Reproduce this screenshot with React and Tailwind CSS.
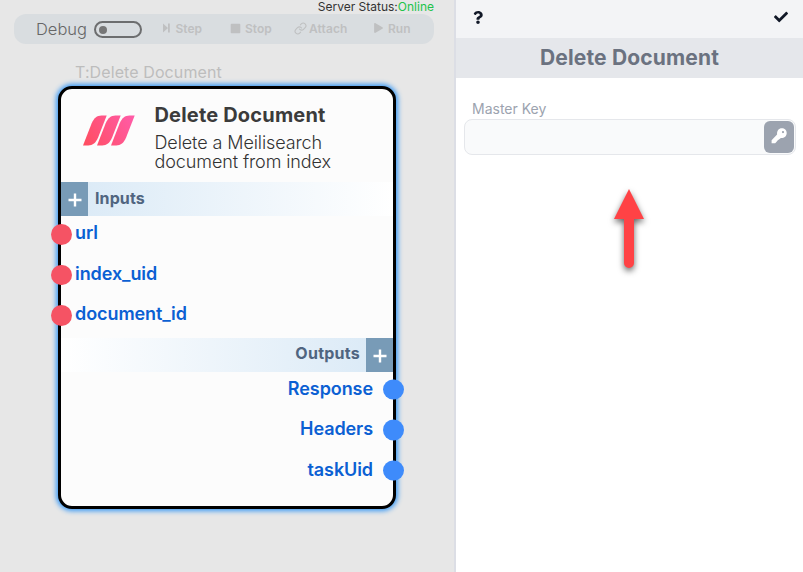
import React from "react";
import { FaCheck, FaQuestion, FaStop, FaPlay } from "react-icons/fa";
import { FiLink } from "react-icons/fi";

const font = "font-['Inter','Liberation_Sans',sans-serif]";

function Tool({ icon, label, className }) {
  return (
    <div className={`flex shrink-0 items-center text-[12px] leading-none font-semibold text-[#bfc0c1] ${className}`}>
      {icon}
      <span className="whitespace-nowrap">{label}</span>
    </div>
  );
}

function StepIcon() {
  return (
    <svg className="mb-[3px] h-[10px] w-[7px]" viewBox="0 0 7 10" fill="currentColor">
      <path d="M0 0.500 5 5 0 9.500ZM5 0.500H6.800V9.500H5Z" />
    </svg>
  );
}

function KeyIcon() {
  return (
    <svg className="mb-[2px] size-[16px]" viewBox="0 0 16 16">
      <path
        fill="white"
        fillRule="evenodd"
        d="M10.800 0.300C13.600 0.300 15.700 2.300 15.700 4.900C15.700 8 13.300 10.200 9.900 10L8.300 11.300L6.800 12.300L5.600 13.700L4.200 15.300H.600V12.200L6.100 6.600C5.700 2.900 7.700.300 10.800.300ZM12 3A1.100 1.100 0 1 0 12 5.200A1.100 1.100 0 1 0 12 3Z"
      />
    </svg>
  );
}

function Toolbar() {
  return (
    <div className="ml-[14px] flex h-[30px] w-[420px] items-center rounded-[12px] bg-[#d9dde0] pl-[22px]">
      <span className="w-[58px] text-[16.5px] leading-none font-light text-[#666]">Debug</span>
      <div className="mt-px flex h-[17px] w-[48px] items-center rounded-full border-2 border-[#6d6e6f] pl-[3px]">
        <div className="size-[8px] rounded-full bg-[#777]" />
      </div>
      <Tool className="ml-[21px] w-[67px] gap-[5.500px]" icon={<StepIcon />} label="Step" />
      <Tool className="w-[64px] gap-[4px]" icon={<FaStop className="mb-[2px] size-[11px]" />} label="Stop" />
      <Tool className="w-[80px] gap-[2px] tracking-[0.1px]" icon={<FiLink className="mb-[2px] size-[13px]" />} label="Attach" />
      <Tool className="gap-[5px]" icon={<FaPlay className="mb-[2px] h-[10px] w-[9px]" />} label="Run" />
    </div>
  );
}

function Logo() {
  return (
    <svg className="h-[31px] w-[52px]" viewBox="0 0 52 31">
      <defs>
        <linearGradient id="brand" gradientUnits="userSpaceOnUse" x1="52" y1="0" x2="4" y2="31">
          <stop offset="0" stopColor="#ff5caa" />
          <stop offset="1" stopColor="#ff4e62" />
        </linearGradient>
      </defs>
      <g fill="url(#brand)">
        <path d="M0 30.5 8.7 8.2C10.800 3.200 14 .5 18.500 .5H23.700L15 22.800C12.900 27.900 9.700 30.500 5.200 30.500Z" />
        <path d="M14 30.5 22.700 8.2C24.800 3.200 28 .5 32.500 .5H37.700L29 22.800C26.900 27.900 23.700 30.500 19.200 30.500Z" />
        <path d="M28 30.5 36.700 8.2C38.800 3.200 42 .5 46.500 .5H51.700L43 22.800C40.900 27.900 37.700 30.500 33.200 30.500Z" />
      </g>
    </svg>
  );
}

function Plus() {
  return (
    <div className="flex h-full w-[27px] shrink-0 items-center justify-center bg-[#789bb7]">
      <svg className="mt-[2px] size-[14px]" viewBox="0 0 14 14" stroke="white" strokeWidth="2.4">
        <path d="M0.500 7H13.500M7 0.500V13.500" />
      </svg>
    </div>
  );
}

function Port({ name, out }) {
  return (
    <div className={`relative flex h-[40.500px] items-center text-[18px] leading-none font-semibold tracking-[-0.08px] text-[#0b60d3] ${out ? "justify-end pr-[20px]" : "pl-[14px]"}`}>
      <span className="mb-[2px]">{name}</span>
      <div className={`absolute top-[10px] size-[20.500px] rounded-full ${out ? "-right-[10.500px] bg-[#3e8bfb]" : "-left-[10px] bg-[#f55364]"}`} />
    </div>
  );
}

function NodeCard() {
  return (
    <div className="mt-[4px] ml-[58px] flex h-[423px] w-[338px] flex-col rounded-[14px] border-3 border-black bg-[#fcfcfc] shadow-[0_0_5px_2px_#3b9af5]">
      <div className="flex h-[93px] shrink-0">
        <div className="w-[93.500px] pt-[26px] pl-[22px]"><Logo /></div>
        <div className="pt-[14px]">
          <h2 className="text-[20px] leading-[24px] font-bold tracking-[0.18px] text-[#3b3b3b]">Delete Document</h2>
          <p className="mt-[6px] text-[18px] leading-[19px] font-light tracking-[-0.1px] text-[#333]">Delete a Meilisearch<br />document from index</p>
        </div>
      </div>
      <div className="flex h-[34px] shrink-0 items-center bg-linear-to-r from-[#d9e9f6] to-white">
        <Plus />
        <span className="mb-[2px] pl-[7px] text-[16px] leading-none font-bold tracking-[0.1px] text-[#506580]">Inputs</span>
      </div>
      <div className="h-[121.500px] shrink-0 -translate-y-[2px]">
        <Port name="url" />
        <Port name="index_uid" />
        <Port name="document_id" />
      </div>
      <div className="flex h-[34px] shrink-0 items-center justify-end bg-linear-to-l from-[#d9e9f6] to-white">
        <span className="mb-[3px] pr-[6px] text-[16px] leading-none font-bold tracking-[0.25px] text-[#506580]">Outputs</span>
        <Plus />
      </div>
      <div className="-translate-y-[2.500px]">
        <Port name="Response" out />
        <Port name="Headers" out />
        <Port name="taskUid" out />
      </div>
    </div>
  );
}

function Arrow() {
  return (
    <svg className="mt-[29px] ml-[148px] h-[100px] w-[50px] overflow-visible drop-shadow-[0_3px_3px_rgba(0,0,0,0.6)]" viewBox="0 0 50 100">
      <path d="M25 5 40 35H30V79A5 5 0 0 1 20 79V35H10Z" fill="#ff4245" />
    </svg>
  );
}

export default function App() {
  return (
    <div className={`flex h-[572px] w-[803px] overflow-hidden ${font}`}>
      <main className="w-[454px] shrink-0 bg-[#e7e7e7]">
        <div className="flex h-[14px] justify-end pr-[20px] text-[12px] leading-[13px] text-[#333]">
          Server Status:<span className="text-[#22c34a]">Online</span>
        </div>
        <Toolbar />
        <div className="mt-[18px] ml-[75px] h-[20px] text-[16px] leading-[20px] tracking-[0.1px] text-[#bdbdbd]">T:Delete Document</div>
        <NodeCard />
      </main>
      <aside className="grow border-l-2 border-[#dcdee5] bg-white">
        <div className="flex h-[38px] items-center justify-between bg-[#f3f4f6] pr-[15px] pl-[15px] text-[#111827]">
          <FaQuestion className="mb-[3px] h-[13px] w-[14px]" />
          <FaCheck className="mb-[4px] size-[14px]" />
        </div>
        <h1 className="h-[40px] bg-[#e5e7eb] text-center text-[21px] leading-[40px] font-bold tracking-[0.15px] text-[#6b7280]">Delete Document</h1>
        <div className="pt-[21px] pl-[8px]">
          <label className="block pl-[8px] text-[14px] leading-[20px] text-[#9ca3af]">Master Key</label>
          <div className="flex h-[36px] w-[332px] items-center justify-end rounded-[8px] border border-[#e5e7eb] bg-[#f9fafb] pr-px">
            <div className="flex h-[32px] w-[30px] items-center justify-center rounded-[6px] bg-[#9ca3af]">
              <KeyIcon />
            </div>
          </div>
        </div>
        <Arrow />
      </aside>
    </div>
  );
}
